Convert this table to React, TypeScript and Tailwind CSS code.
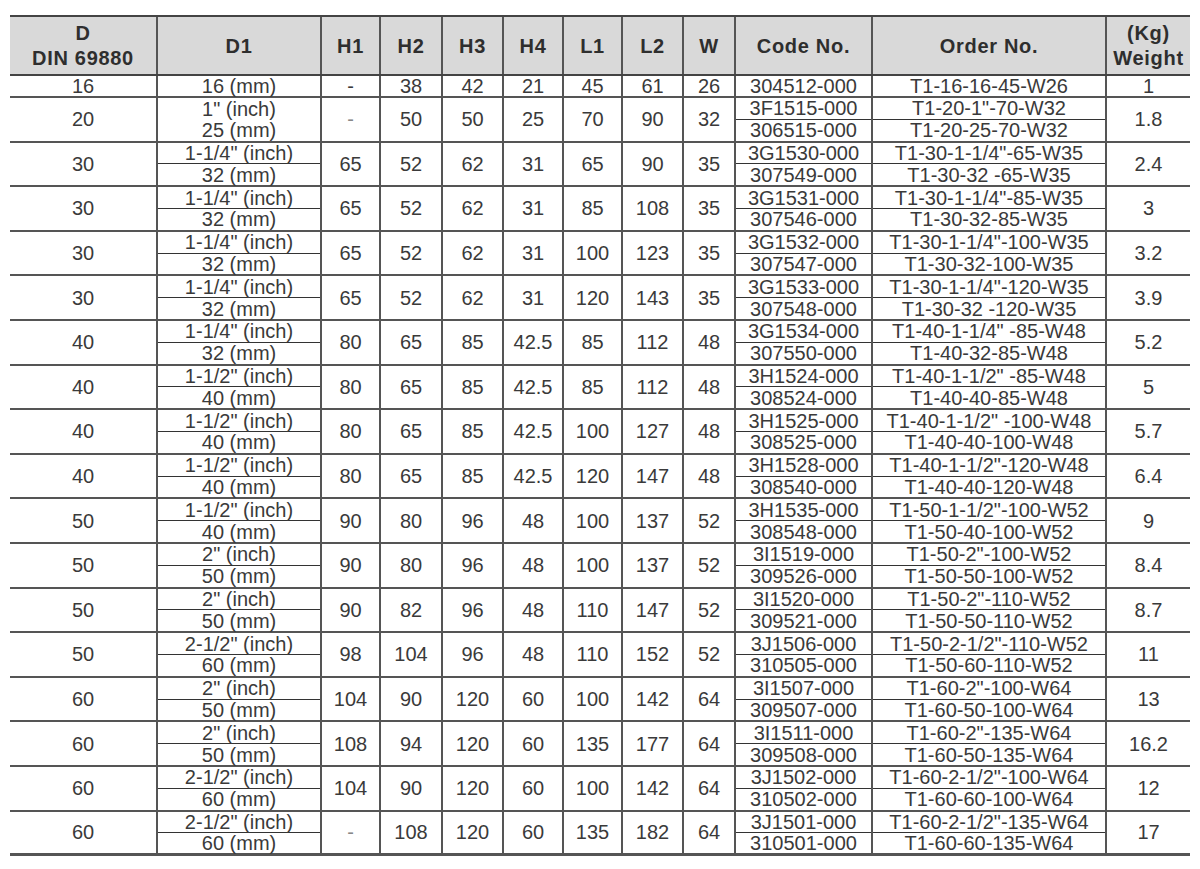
import React from "react";

type Row = {
  d: string;
  d1: [string, string];
  d1Line?: boolean;
  h: string[]; // H1 H2 H3 H4 L1 L2 W
  code: [string, string];
  order: [string, string];
  kg: string;
};

const W = [148, 164, 59, 62, 61, 60, 59, 61, 52, 137, 234, 83];

const ROWS: Row[] = [
  { d: "20", d1: ['1" (inch)', "25 (mm)"], d1Line: false, h: ["-", "50", "50", "25", "70", "90", "32"], code: ["3F1515-000", "306515-000"], order: ['T1-20-1"-70-W32', "T1-20-25-70-W32"], kg: "1.8" },
  { d: "30", d1: ['1-1/4" (inch)', "32 (mm)"], h: ["65", "52", "62", "31", "65", "90", "35"], code: ["3G1530-000", "307549-000"], order: ['T1-30-1-1/4"-65-W35', "T1-30-32 -65-W35"], kg: "2.4" },
  { d: "30", d1: ['1-1/4" (inch)', "32 (mm)"], h: ["65", "52", "62", "31", "85", "108", "35"], code: ["3G1531-000", "307546-000"], order: ['T1-30-1-1/4"-85-W35', "T1-30-32-85-W35"], kg: "3" },
  { d: "30", d1: ['1-1/4" (inch)', "32 (mm)"], h: ["65", "52", "62", "31", "100", "123", "35"], code: ["3G1532-000", "307547-000"], order: ['T1-30-1-1/4"-100-W35', "T1-30-32-100-W35"], kg: "3.2" },
  { d: "30", d1: ['1-1/4" (inch)', "32 (mm)"], h: ["65", "52", "62", "31", "120", "143", "35"], code: ["3G1533-000", "307548-000"], order: ['T1-30-1-1/4"-120-W35', "T1-30-32 -120-W35"], kg: "3.9" },
  { d: "40", d1: ['1-1/4" (inch)', "32 (mm)"], h: ["80", "65", "85", "42.5", "85", "112", "48"], code: ["3G1534-000", "307550-000"], order: ['T1-40-1-1/4" -85-W48', "T1-40-32-85-W48"], kg: "5.2" },
  { d: "40", d1: ['1-1/2" (inch)', "40 (mm)"], h: ["80", "65", "85", "42.5", "85", "112", "48"], code: ["3H1524-000", "308524-000"], order: ['T1-40-1-1/2" -85-W48', "T1-40-40-85-W48"], kg: "5" },
  { d: "40", d1: ['1-1/2" (inch)', "40 (mm)"], h: ["80", "65", "85", "42.5", "100", "127", "48"], code: ["3H1525-000", "308525-000"], order: ['T1-40-1-1/2" -100-W48', "T1-40-40-100-W48"], kg: "5.7" },
  { d: "40", d1: ['1-1/2" (inch)', "40 (mm)"], h: ["80", "65", "85", "42.5", "120", "147", "48"], code: ["3H1528-000", "308540-000"], order: ['T1-40-1-1/2"-120-W48', "T1-40-40-120-W48"], kg: "6.4" },
  { d: "50", d1: ['1-1/2" (inch)', "40 (mm)"], h: ["90", "80", "96", "48", "100", "137", "52"], code: ["3H1535-000", "308548-000"], order: ['T1-50-1-1/2"-100-W52', "T1-50-40-100-W52"], kg: "9" },
  { d: "50", d1: ['2" (inch)', "50 (mm)"], h: ["90", "80", "96", "48", "100", "137", "52"], code: ["3I1519-000", "309526-000"], order: ['T1-50-2"-100-W52', "T1-50-50-100-W52"], kg: "8.4" },
  { d: "50", d1: ['2" (inch)', "50 (mm)"], h: ["90", "82", "96", "48", "110", "147", "52"], code: ["3I1520-000", "309521-000"], order: ['T1-50-2"-110-W52', "T1-50-50-110-W52"], kg: "8.7" },
  { d: "50", d1: ['2-1/2" (inch)', "60 (mm)"], h: ["98", "104", "96", "48", "110", "152", "52"], code: ["3J1506-000", "310505-000"], order: ['T1-50-2-1/2"-110-W52', "T1-50-60-110-W52"], kg: "11" },
  { d: "60", d1: ['2" (inch)', "50 (mm)"], h: ["104", "90", "120", "60", "100", "142", "64"], code: ["3I1507-000", "309507-000"], order: ['T1-60-2"-100-W64', "T1-60-50-100-W64"], kg: "13" },
  { d: "60", d1: ['2" (inch)', "50 (mm)"], h: ["108", "94", "120", "60", "135", "177", "64"], code: ["3I1511-000", "309508-000"], order: ['T1-60-2"-135-W64', "T1-60-50-135-W64"], kg: "16.2" },
  { d: "60", d1: ['2-1/2" (inch)', "60 (mm)"], h: ["104", "90", "120", "60", "100", "142", "64"], code: ["3J1502-000", "310502-000"], order: ['T1-60-2-1/2"-100-W64', "T1-60-60-100-W64"], kg: "12" },
  { d: "60", d1: ['2-1/2" (inch)', "60 (mm)"], h: ["-", "108", "120", "60", "135", "182", "64"], code: ["3J1501-000", "310501-000"], order: ['T1-60-2-1/2"-135-W64', "T1-60-60-135-W64"], kg: "17" },
];

const HEAD = ["D1", "H1", "H2", "H3", "H4", "L1", "L2", "W", "Code No.", "Order No."];

function Cell({ w, last, children, light }: { w: number; last?: boolean; children: React.ReactNode; light?: boolean }) {
  return (
    <div
      style={{ width: w }}
      className={`flex shrink-0 items-center justify-center ${last ? "" : "border-r-2 border-[#555]"} ${light ? "text-[#888]" : ""}`}
    >
      {children}
    </div>
  );
}

function Split({ w, top, bottom, line = true }: { w: number; top: string; bottom: string; line?: boolean }) {
  return (
    <div style={{ width: w }} className="flex shrink-0 flex-col border-r-2 border-[#555]">
      <div className={`flex flex-1 items-center justify-center ${line ? "border-b border-[#333]" : ""}`}>{top}</div>
      <div className="flex flex-1 items-center justify-center">{bottom}</div>
    </div>
  );
}

export default function App() {
  return (
    <div className="min-h-[869px] bg-white pt-[15px] pl-[10px] font-['Liberation_Sans',Arial,sans-serif] text-[20px] leading-[20px] text-[#3a3a3a]">
      <div className="w-[1180px]">
        {/* header */}
        <div className="flex h-[61px] border-y-2 border-[#444] bg-[#d9d9d9] font-bold tracking-[0.7px] text-[#2e2e2e]">
          <Cell w={W[0]}>
            <div className="text-center leading-[25px]">
              D
              <br />
              DIN 69880
            </div>
          </Cell>
          {HEAD.map((h, i) => (
            <Cell key={h} w={W[i + 1]}>
              {h}
            </Cell>
          ))}
          <Cell w={W[11]} last>
            <div className="text-center leading-[25px]">
              (Kg)
              <br />
              Weight
            </div>
          </Cell>
        </div>

        {/* first single row */}
        <div className="flex h-[22px] border-b-2 border-[#555]">
          <Cell w={W[0]}>16</Cell>
          <Cell w={W[1]}>16 (mm)</Cell>
          <Cell w={W[2]}>-</Cell>
          {["38", "42", "21", "45", "61", "26"].map((v, i) => (
            <Cell key={i} w={W[i + 3]}>
              {v}
            </Cell>
          ))}
          <Cell w={W[9]}>304512-000</Cell>
          <Cell w={W[10]}>T1-16-16-45-W26</Cell>
          <Cell w={W[11]} last>
            1
          </Cell>
        </div>

        {ROWS.map((r, idx) => (
          <div
            key={idx}
            className={`flex h-[44.6px] border-[#555] ${idx === ROWS.length - 1 ? "border-b-[3px]" : "border-b-2"}`}
          >
            <Cell w={W[0]}>{r.d}</Cell>
            <Split w={W[1]} top={r.d1[0]} bottom={r.d1[1]} line={r.d1Line !== false} />
            {r.h.map((v, i) => (
              <Cell key={i} w={W[i + 2]} light={v === "-"}>
                {v}
              </Cell>
            ))}
            <Split w={W[9]} top={r.code[0]} bottom={r.code[1]} />
            <Split w={W[10]} top={r.order[0]} bottom={r.order[1]} />
            <Cell w={W[11]} last>
              {r.kg}
            </Cell>
          </div>
        ))}
      </div>
    </div>
  );
}
